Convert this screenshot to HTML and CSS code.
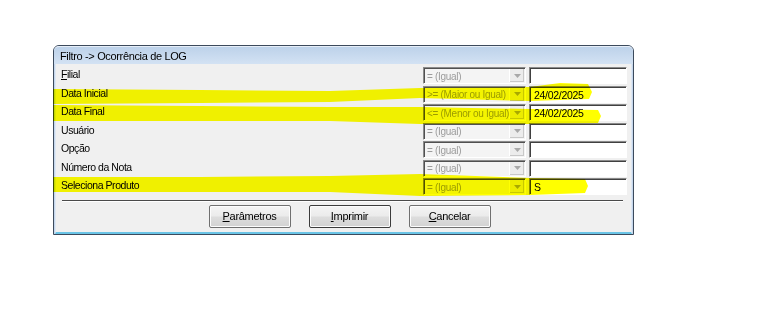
FILE: index.html
```html
<!DOCTYPE html>
<html lang="pt">
<head>
    <meta charset="UTF-8">
    <title>Filtro -> Ocorrência de LOG</title>
    <link rel="stylesheet" href="styles.css">
</head>
<body>
    <div class="window">
        <div class="titlebar">Filtro -&gt; Ocorrência de LOG</div>
        <div class="content">
            <div class="rows">
                <div class="label"><u>F</u>ilial</div>
                <div class="combo"><span>= (Igual)</span><div class="arrow"><svg width="7" height="4"><path d="M0 0H7L3.5 4Z"/></svg></div></div>
                <div class="field"></div>

                <div class="label">Data Inicial</div>
                <div class="combo"><span>&gt;= (Maior ou Igual)</span><div class="arrow"><svg width="7" height="4"><path d="M0 0H7L3.5 4Z"/></svg></div></div>
                <div class="field">24/02/2025</div>

                <div class="label">Data Final</div>
                <div class="combo"><span>&lt;= (Menor ou Igual)</span><div class="arrow"><svg width="7" height="4"><path d="M0 0H7L3.5 4Z"/></svg></div></div>
                <div class="field">24/02/2025</div>

                <div class="label">Usuário</div>
                <div class="combo"><span>= (Igual)</span><div class="arrow"><svg width="7" height="4"><path d="M0 0H7L3.5 4Z"/></svg></div></div>
                <div class="field"></div>

                <div class="label">Opção</div>
                <div class="combo"><span>= (Igual)</span><div class="arrow"><svg width="7" height="4"><path d="M0 0H7L3.5 4Z"/></svg></div></div>
                <div class="field"></div>

                <div class="label">Número da Nota</div>
                <div class="combo"><span>= (Igual)</span><div class="arrow"><svg width="7" height="4"><path d="M0 0H7L3.5 4Z"/></svg></div></div>
                <div class="field"></div>

                <div class="label">Seleciona Produto</div>
                <div class="combo"><span>= (Igual)</span><div class="arrow"><svg width="7" height="4"><path d="M0 0H7L3.5 4Z"/></svg></div></div>
                <div class="field">S</div>
            </div>
            <div class="separator"></div>
            <div class="buttons">
                <button><u>P</u>arâmetros</button>
                <button class="default"><u>I</u>mprimir</button>
                <button><u>C</u>ancelar</button>
            </div>
        </div>
    </div>

    <!-- marca-texto amarelo por cima do formulário -->
    <svg class="marker" width="769" height="320">
        <polygon points="53,89 200,90 330,91 420,88 530,87 560,83 588,84 592,92 589,99 530,101 420,98 330,102 200,103 53,104"/>
        <polygon points="53,105 200,106 330,107 420,107 530,109 598,110 601,116 598,123 530,124 420,124 330,121 200,121 53,121"/>
        <polygon points="53,177 200,177 330,176 420,174 530,178 585,179 588,186 585,193 530,195 420,196 330,192 200,192 53,192"/>
    </svg>
</body>
</html>
```

FILE: styles.css
```css
body {
    margin: 0;
    background-color: #fff;
    font-family: "Liberation Sans", Arial, sans-serif;
    font-size: 10.5px;
    letter-spacing: -0.45px;
    color: #000;
}

.window {
    margin: 45px 0 0 53px;
    width: 581px;
    border: 1px solid #3c4a5c;
    border-radius: 6px 6px 0 0;
    box-sizing: border-box;
    background-color: #c5d7ed;
}

.titlebar {
    height: 18px;
    padding: 3px 0 0 6px;
    box-sizing: border-box;
    font-size: 11px;
    letter-spacing: -0.35px;
    border-radius: 5px 5px 0 0;
    background: linear-gradient(#bdd2ea, #d3e2f3);
    border-top: 1px solid #e6eef8;
}

.content {
    margin: 0 1px;
    padding: 3px 3px 3px 5px;
    background-color: #f0f0f0;
    border-bottom: 2px solid #6ac4e6;
    border-left: 1px solid #dfe8f3;
    border-right: 1px solid #dfe8f3;
}

.rows {
    display: grid;
    grid-template-columns: 1fr 103px 98px;
    grid-auto-rows: 18.5px;
    column-gap: 3px;
    padding-right: 1px;
}

.label {
    padding-top: 1px;
    line-height: 13px;
}

.combo {
    height: 17px;
    display: flex;
    align-items: center;
    box-sizing: border-box;
    border: 1px solid;
    border-color: #8a8a8a #fff #fff #8a8a8a;
    box-shadow: inset 1px 1px 0 #505050;
    background-color: #f4f4f4;
    color: #9c9c9c;
    padding-left: 3px;
    font-size: 10px;
    letter-spacing: -0.3px;
}

.combo span {
    flex: 1;
    padding-top: 1px;
    white-space: nowrap;
    overflow: hidden;
}

.arrow {
    width: 14px;
    height: 13px;
    margin-right: 1px;
    display: flex;
    align-items: center;
    justify-content: center;
    background-color: #ececec;
    border-left: 1px solid #fff;
    box-shadow: inset -1px -1px 0 #c8c8c8;
}

.arrow svg {
    fill: #a8a8a8;
}

.field {
    height: 17px;
    box-sizing: border-box;
    border: 1px solid;
    border-color: #8a8a8a #fff #fff #8a8a8a;
    box-shadow: inset 1px 1px 0 #404040;
    background-color: #fff;
    padding: 2px 0 0 4px;
    line-height: 13px;
    letter-spacing: -0.3px;
}

.separator {
    margin: 3px 5px 0 1px;
    height: 1px;
    background-color: #4a4a4a;
    border-bottom: 1px solid #fff;
}

.buttons {
    display: flex;
    justify-content: center;
    gap: 18px;
    padding: 3px 0 1px 10px;
}

button {
    width: 82px;
    height: 23px;
    font-family: "Liberation Sans", Arial, sans-serif;
    font-size: 11px;
    letter-spacing: -0.3px;
    color: #000;
    border: 1px solid #707070;
    border-radius: 2px;
    background: linear-gradient(#f4f4f4 0%, #ebebeb 48%, #dddddd 52%, #d2d2d2 100%);
    box-shadow: inset 0 0 0 1px #fcfcfc;
}

button.default {
    border-color: #3c3c3c;
}

.marker {
    position: absolute;
    top: 0;
    left: 0;
    pointer-events: none;
    mix-blend-mode: multiply;
}

.marker polygon {
    fill: #ffff00;
}
```
